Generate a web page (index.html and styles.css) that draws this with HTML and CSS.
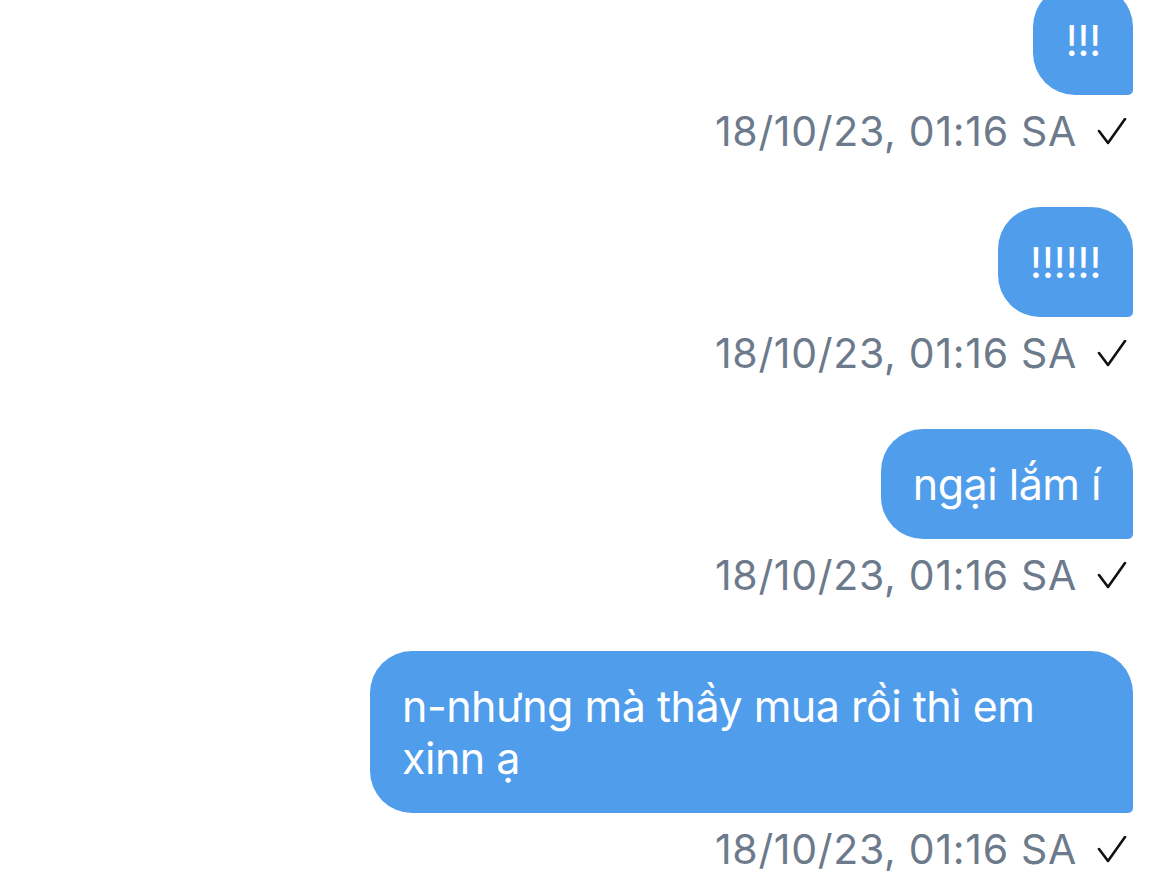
FILE: index.html
```html
<!DOCTYPE html>
<html lang="vi">
<head>
<meta charset="UTF-8">
<meta name="viewport" content="width=device-width, initial-scale=1.0">
<title>Tin nhắn</title>
<link rel="stylesheet" href="styles.css">
</head>
<body>

<div class="chat">
    <div class="message">
        <div class="bubble">!!!</div>
        <div class="meta">
            <span class="time">18/10/23, 01:16 SA</span>
            <svg class="check" width="30" height="27" viewBox="0 0 30 27"><polyline points="2,13 11,25 28,1" fill="none" stroke="#111" stroke-width="2.6" stroke-linecap="round" stroke-linejoin="round"/></svg>
        </div>
    </div>

    <div class="message">
        <div class="bubble">!!!!!!</div>
        <div class="meta">
            <span class="time">18/10/23, 01:16 SA</span>
            <svg class="check" width="30" height="27" viewBox="0 0 30 27"><polyline points="2,13 11,25 28,1" fill="none" stroke="#111" stroke-width="2.6" stroke-linecap="round" stroke-linejoin="round"/></svg>
        </div>
    </div>

    <div class="message">
        <div class="bubble">ngại lắm í</div>
        <div class="meta">
            <span class="time">18/10/23, 01:16 SA</span>
            <svg class="check" width="30" height="27" viewBox="0 0 30 27"><polyline points="2,13 11,25 28,1" fill="none" stroke="#111" stroke-width="2.6" stroke-linecap="round" stroke-linejoin="round"/></svg>
        </div>
    </div>

    <div class="message">
        <div class="bubble">n-nhưng mà thầy mua rồi thì em xinn ạ</div>
        <div class="meta">
            <span class="time">18/10/23, 01:16 SA</span>
            <svg class="check" width="30" height="27" viewBox="0 0 30 27"><polyline points="2,13 11,25 28,1" fill="none" stroke="#111" stroke-width="2.6" stroke-linecap="round" stroke-linejoin="round"/></svg>
        </div>
    </div>
</div>

</body>
</html>
```

FILE: styles.css
```css
body {
    margin: 0;
    padding: 0;
    background: #fff;
    font-family: Inter, "Noto Sans", sans-serif;
    overflow: hidden;
}
.chat {
    display: flex;
    flex-direction: column;
    align-items: flex-end;
    padding: 0 37px 0 0;
    margin-top: -15px;
}
.message {
    display: flex;
    flex-direction: column;
    align-items: flex-end;
    margin-bottom: 53px;
}
.message:last-child {
    margin-bottom: 0;
}
.bubble {
    max-width: 699px;
    padding: 29px 32px;
    background: #4f9deb;
    color: #fff;
    font-size: 43px;
    letter-spacing: -0.5px;
    line-height: 52px;
    border-radius: 42px 42px 5px 42px;
}
.meta {
    display: flex;
    align-items: center;
    gap: 20px;
    margin-top: 13px;
    margin-right: 6px;
    height: 46px;
}
.time {
    font-size: 41px;
    letter-spacing: 0.7px;
    line-height: 46px;
    color: #6c7a8c;
}
.check {
    display: block;
}
```
